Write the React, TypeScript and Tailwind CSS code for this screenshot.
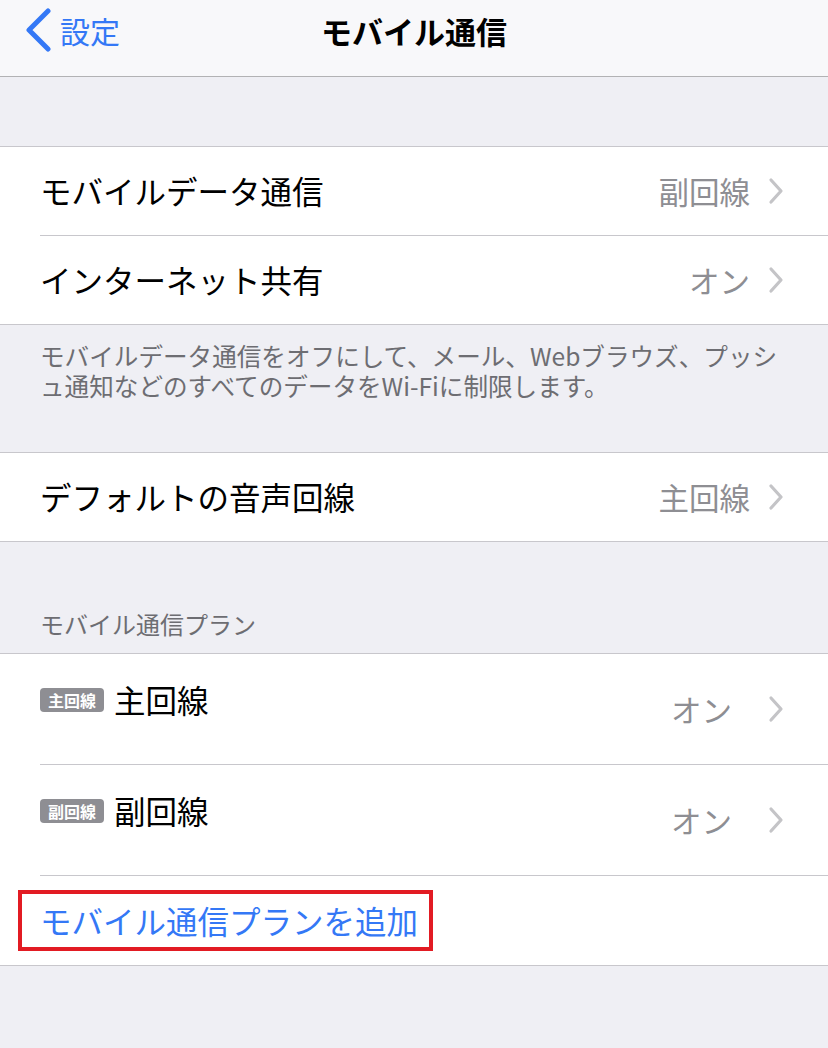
import React from "react";

const font = { fontFamily: '"Noto Sans CJK JP", "Noto Sans", sans-serif' };

function Chevron() {
  return (
    <svg width="16" height="28" viewBox="0 0 16 28" className="shrink-0">
      <path d="M3 3 L13 14 L3 25" fill="none" stroke="#c4c4c7" strokeWidth="3.2" strokeLinecap="round" strokeLinejoin="round" />
    </svg>
  );
}

function Row({ label, value, last }: { label: string; value: string; last?: boolean }) {
  return (
    <div className="bg-white">
      <div className="h-[88px] flex items-center pl-[40px] pr-[44px]">
        <span className="text-[31.5px] text-black flex-1 leading-none">{label}</span>
        <span className="text-[30.5px] text-[#8e8e93] leading-none mr-[18px]">{value}</span>
        <Chevron />
      </div>
      {!last && <div className="ml-[40px] h-px bg-[#c8c7cc]" />}
    </div>
  );
}

function PlanRow({ badge, name }: { badge: string; name: string }) {
  return (
    <div className="bg-white">
      <div className="h-[110px] flex pl-[40px] pr-[44px]">
        <div className="flex-1 flex items-center self-start pt-[18px] h-[56px] box-content">
          <span className="bg-[#8e8e93] text-white text-[16px] font-bold rounded-[4px] h-[24px] w-[64px] flex items-center justify-center leading-none">
            {badge}
          </span>
          <span className="ml-[10px] text-[31.5px] text-black leading-none">{name}</span>
        </div>
        <div className="flex items-center">
          <span className="text-[30.5px] text-[#8e8e93] leading-none mr-[36px]">オン</span>
          <Chevron />
        </div>
      </div>
      <div className="ml-[40px] h-px bg-[#c8c7cc]" />
    </div>
  );
}

export default function App() {
  return (
    <div style={font} className="w-[828px] h-[1048px] bg-[#efeff4] overflow-hidden">
      {/* header */}
      <div className="h-[76px] bg-[#f8f8fa] grid grid-cols-[1fr_auto_1fr] items-center pb-[16px]">
        <div className="flex items-center pl-[24px]">
          <svg width="28" height="44" viewBox="0 0 28 44">
            <path d="M24 3 L5 22 L24 41" fill="none" stroke="#3478f6" strokeWidth="5" strokeLinecap="round" strokeLinejoin="round" />
          </svg>
          <span className="ml-[8px] text-[30px] text-[#3478f6] leading-none">設定</span>
        </div>
        <div className="text-[31px] font-bold text-black leading-none">モバイル通信</div>
        <div />
      </div>
      <div className="h-px bg-[#b2b2b4]" />
      <div className="h-[69px]" />
      <div className="h-px bg-[#c8c7cc]" />

      <Row label="モバイルデータ通信" value="副回線" />
      <Row label="インターネット共有" value="オン" last />
      <div className="h-px bg-[#c8c7cc]" />

      <div className="h-[127px] pt-[15px] pl-[40px] pr-[20px] text-[24.6px] text-[#6d6d72]">
        <div className="leading-[30px] h-[30px] whitespace-nowrap">モバイルデータ通信をオフにして、メール、Webブラウズ、プッシ</div>
        <div className="leading-[30px] h-[30px] whitespace-nowrap">ュ通知などのすべてのデータをWi-Fiに制限します。</div>
      </div>
      <div className="h-px bg-[#c8c7cc]" />

      <Row label="デフォルトの音声回線" value="主回線" last />
      <div className="h-px bg-[#c8c7cc]" />

      <div className="h-[111px] flex items-end pb-[14px] pl-[40px]">
        <span className="text-[24px] leading-[30px] text-[#6d6d72]">モバイル通信プラン</span>
      </div>
      <div className="h-px bg-[#c8c7cc]" />

      <PlanRow badge="主回線" name="主回線" />
      <PlanRow badge="副回線" name="副回線" />

      <div className="bg-white h-[89px] flex items-center pl-[18px]">
        <span className="border-4 border-[#e21b23] h-[61px] flex items-center pl-[18px] pr-[11px] text-[31.5px] text-[#3478f6] leading-none">
          モバイル通信プランを追加
        </span>
      </div>
      <div className="h-px bg-[#c8c7cc]" />
    </div>
  );
}
